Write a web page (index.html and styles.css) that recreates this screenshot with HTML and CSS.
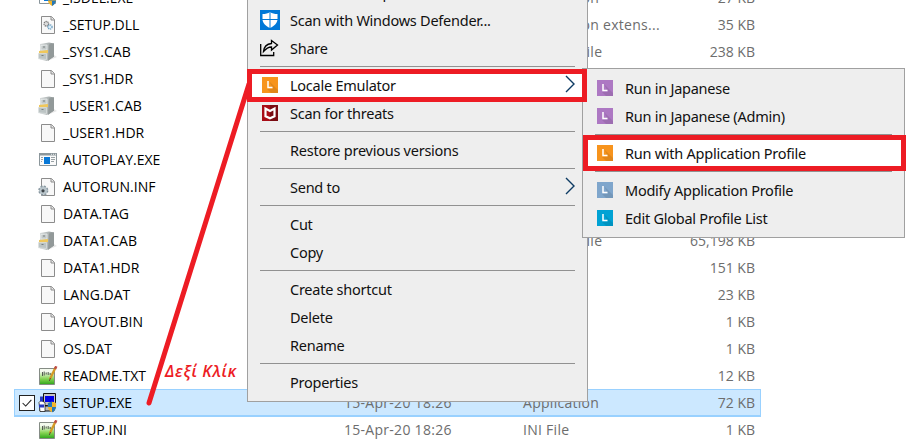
FILE: index.html
```
<!DOCTYPE html>
<html lang="en">
<head>
<meta charset="utf-8">
<title>Files</title>
<link rel="stylesheet" href="styles.css">
</head>
<body>
<svg class="defs" aria-hidden="true">
  <defs>
    <linearGradient id="steel" x1="0" x2="1"><stop offset="0" stop-color="#d7dbdb"/><stop offset=".6" stop-color="#aeb4b4"/><stop offset="1" stop-color="#858d8d"/></linearGradient>
    <linearGradient id="grass" x1="0" y1="0" x2="0" y2="1"><stop offset=".2" stop-color="#f4faee"/><stop offset=".65" stop-color="#84d352"/><stop offset="1" stop-color="#2da51b"/></linearGradient>
    <symbol id="doc" viewBox="0 0 20 20"><path d="M3.5 1.5h10l3 3v14h-13z" fill="#f8f8f8" stroke="#8c8c8c"/><path d="M13 1.5v3.5h3.5" fill="#e5e5e5" stroke="#8c8c8c"/></symbol>
    <symbol id="dll" viewBox="0 0 20 20"><use href="#doc"/><circle cx="8.3" cy="8.8" r="2.3" fill="#ddd" stroke="#777" stroke-width="1.3" stroke-dasharray="1.2 .6"/><circle cx="12" cy="12" r="2.1" fill="#d9edfa" stroke="#6c9dbd" stroke-width="1.3" stroke-dasharray="1.2 .6"/></symbol>
    <symbol id="cab" viewBox="0 0 20 20"><path d="M12 18l7-3-3-2z" fill="#e7e7e7"/><path d="M2 2l9-1.5 5 1v13L9 19l-7-1.500z" fill="url(#steel)"/><path d="M11 2.500l5-1v13L10 19z" fill="#929999"/><path d="M3 3.500l6-.5v5H3z" fill="#c2c8c8" stroke="#edf0f0" stroke-width=".7"/><path d="M1 9l9-1v3l-9 1z" fill="#efc75c"/><path d="M.5 11.500h8v6l-8-.7z" fill="#bcc4c4" stroke="#dce1e1" stroke-width=".7"/><path d="M5 5h2M3.500 13.500h2" stroke="#777f7f"/></symbol>
    <symbol id="auto" viewBox="0 0 20 20"><path d="M1.500 3.500h17v12h-17z" fill="#fafafa" stroke="#8b969b"/><path d="M1 3h18v2.500H1z" fill="#8b969b"/><path d="M13 4.300h1m1 0h1m1 0h1" stroke="#fff" stroke-width=".8"/><path d="M6 7h6v7H6z" fill="#0878d7"/><path d="M3 7.500h2M3 9.500h2M3 11.500h1M13 7.500h4M13 9.500h4M13 11.500h3" stroke="#9aa2a5"/></symbol>
    <symbol id="inf" viewBox="0 0 20 20"><use href="#doc"/><circle cx="5.300" cy="13.500" r="4.200" fill="#b8c4ca" stroke="#8998a1" stroke-width="1.700" stroke-dasharray="2 1.300"/><circle cx="5.300" cy="13.500" r="3.600" fill="#b8c4ca"/><circle cx="5" cy="13.800" r="1.600" fill="#3c4348"/></symbol>
    <symbol id="note" viewBox="0 0 20 20"><path d="M1.500 2.500h15v16h-15z" fill="url(#grass)" stroke="#858c85"/><path d="M4.500 6v4m1.700-4.500v4m2-3v2m2-2.500v3m2-2v2" stroke="#454b45" stroke-width=".9"/><path d="M17.500 1.500L12 13" stroke="#d49a24" stroke-width="2.300"/><path d="M18.300.300L17 3" stroke="#bd4e47" stroke-width="2.500"/><path d="M12.400 12l-1 3" stroke="#594b37"/></symbol>
    <symbol id="shield" viewBox="0 0 10 12"><path d="M5 0l4.500 1.500v4C9.500 8.500 7.500 10.500 5 12 2.500 10.500.5 8.500.5 5.500v-4z" fill="#f2b52c"/><path d="M5 0v6H.5V1.500zM5 6h4.500C9 9 7.500 10.500 5 12z" fill="#2678b9"/></symbol>
    <symbol id="setup" viewBox="0 0 20 20"><path d="M5.500.5h12v12h-12z" fill="#c5c5c5" stroke="#111"/><path d="M7 3h9v6H7z" fill="#0000e8"/><path d="M2 13h14v5H2z" fill="#bbb" stroke="#111"/><path d="M1 9.500l2-2 4 2v9H2z" fill="#fff" stroke="#111" stroke-width=".7"/><path d="M1 11.500h5v3H1zM2 3.500h3v5H2z" fill="#2638bf"/><use href="#shield" x="9" y="8.500" width="10" height="11"/></symbol>
    <symbol id="isdel" viewBox="0 0 20 20"><path d="M1.500 3.500h16v12h-16z" fill="#fff" stroke="#89959b"/><path d="M6 6h9v7H6z" fill="#0878d7"/><use href="#shield" x="9" y="7" width="10" height="11"/></symbol>
    <symbol id="L" viewBox="0 0 16 16"><path d="M0 0h16v16H0z" fill="currentColor"/><path d="M7 4l9 9v3H9l-4-4h6z" fill="#000" opacity=".09"/><path d="M6 4v6.500h4.500" fill="none" stroke="#fff" stroke-width="1.500"/></symbol>
    <symbol id="arrow" viewBox="0 0 10 18"><path d="M1 1l8 8-8 8" fill="none" stroke="#0d3b63" stroke-width="1.400"/></symbol>
  </defs>
</svg>
<main class="stage">
  <div class="files">
    <div class="row"><svg><use href="#isdel"/></svg><span class="name">_ISDEL.EXE</span><span class="date"></span><span class="type">Application</span><span class="size">27 KB</span></div>
    <div class="row"><svg><use href="#dll"/></svg><span class="name">_SETUP.DLL</span><span class="date"></span><span class="type">Application extens...</span><span class="size">35 KB</span></div>
    <div class="row"><svg><use href="#cab"/></svg><span class="name">_SYS1.CAB</span><span class="date"></span><span class="type">Cabinet File</span><span class="size">238 KB</span></div>
    <div class="row"><svg><use href="#doc"/></svg><span class="name">_SYS1.HDR</span></div>
    <div class="row"><svg><use href="#cab"/></svg><span class="name">_USER1.CAB</span></div>
    <div class="row"><svg><use href="#doc"/></svg><span class="name">_USER1.HDR</span></div>
    <div class="row"><svg><use href="#auto"/></svg><span class="name">AUTOPLAY.EXE</span></div>
    <div class="row"><svg><use href="#inf"/></svg><span class="name">AUTORUN.INF</span></div>
    <div class="row"><svg><use href="#doc"/></svg><span class="name">DATA.TAG</span></div>
    <div class="row"><svg><use href="#cab"/></svg><span class="name">DATA1.CAB</span><span class="date"></span><span class="type">Cabinet File</span><span class="size">65,198 KB</span></div>
    <div class="row"><svg><use href="#doc"/></svg><span class="name">DATA1.HDR</span><span class="date"></span><span class="type"></span><span class="size">151 KB</span></div>
    <div class="row"><svg><use href="#doc"/></svg><span class="name">LANG.DAT</span><span class="date"></span><span class="type"></span><span class="size">23 KB</span></div>
    <div class="row"><svg><use href="#doc"/></svg><span class="name">LAYOUT.BIN</span><span class="date"></span><span class="type"></span><span class="size">1 KB</span></div>
    <div class="row"><svg><use href="#doc"/></svg><span class="name">OS.DAT</span><span class="date"></span><span class="type"></span><span class="size">1 KB</span></div>
    <div class="row"><svg><use href="#note"/></svg><span class="name">README.TXT</span><span class="date"></span><span class="type"></span><span class="size">12 KB</span></div>
    <div class="row selected"><span class="check"><svg viewBox="0 0 16 16"><path d="M3 8l3.500 3.500L13 4.500" fill="none" stroke="#222" stroke-width="1.200"/></svg></span><svg><use href="#setup"/></svg><span class="name">SETUP.EXE</span><span class="date">15-Apr-20 18:26</span><span class="type">Application</span><span class="size">72 KB</span></div>
    <div class="row"><svg><use href="#note"/></svg><span class="name">SETUP.INI</span><span class="date">15-Apr-20 18:26</span><span class="type">INI File</span><span class="size">1 KB</span></div>
  </div>

  <nav class="menu context">
    <div class="item"><span class="icon"><svg width="16" height="16" viewBox="0 0 16 16"><path d="M0 0h16v16H0z" fill="#5b5b60"/></svg></span>Edit with Notepad++</div>
    <div class="item"><span class="icon"><svg width="20" height="20" viewBox="0 0 20 20"><path d="M0 0h20v20H0z" fill="#0078d7"/><path d="M10 2c2 1.500 4.500 2 7.500 2v5c0 4-3 7-7.500 9-4.500-2-7.500-5-7.500-9V4C5.500 4 8 3.500 10 2z" fill="#fff"/><path d="M10 2v16M2 9.500h16" stroke="#0078d7"/></svg></span>Scan with Windows Defender...</div>
    <div class="item"><span class="icon"><svg width="20" height="18" viewBox="0 0 20 18"><path d="M.7 5v11.500h13V13M3.500 12.500c.5-5 3.500-7.500 8-8V1.500L17.500 6l-6 5V8c-3.500 0-5.500 1.500-8 4.500z" fill="none" stroke="#000" stroke-width="1.300"/></svg></span>Share</div>
    <hr>
    <div class="item active"><span class="icon orange"><svg width="16" height="16"><use href="#L"/></svg></span>Locale Emulator<svg class="arrow"><use href="#arrow"/></svg></div>
    <div class="item"><span class="icon"><svg width="16" height="16" viewBox="0 0 16 16"><path d="M0 0h16v16H0z" fill="#a80d17"/><path d="M8 0h8v16H8z" fill="#790b12"/><path d="M3.500 3.500v7.700L8 13.300l4.500-2.100V3.500L8 6z" fill="none" stroke="#fff" stroke-width="2.200"/></svg></span>Scan for threats</div>
    <hr>
    <div class="item">Restore previous versions</div>
    <hr>
    <div class="item">Send to<svg class="arrow"><use href="#arrow"/></svg></div>
    <hr>
    <div class="item">Cut</div>
    <div class="item">Copy</div>
    <hr>
    <div class="item">Create shortcut</div>
    <div class="item">Delete</div>
    <div class="item">Rename</div>
    <hr>
    <div class="item">Properties</div>
  </nav>

  <nav class="menu submenu">
    <div class="item"><span class="icon purple"><svg width="16" height="16"><use href="#L"/></svg></span>Run in Japanese</div>
    <div class="item"><span class="icon purple"><svg width="16" height="16"><use href="#L"/></svg></span>Run in Japanese (Admin)</div>
    <hr>
    <div class="item active"><span class="icon orange"><svg width="16" height="16"><use href="#L"/></svg></span>Run with Application Profile</div>
    <hr>
    <div class="item"><span class="icon slate"><svg width="16" height="16"><use href="#L"/></svg></span>Modify Application Profile</div>
    <div class="item"><span class="icon cyan"><svg width="16" height="16"><use href="#L"/></svg></span>Edit Global Profile List</div>
  </nav>

  <svg class="marks" viewBox="0 0 912 445"><path d="M149 403L249 84" stroke-linecap="round"/><path d="M249.500 71.500h335v28h-335zM585.500 137.500h318v31h-318z"/></svg>
  <div class="note">Δεξί Κλίκ</div>
</main>
</body>
</html>
```

FILE: styles.css
```
body { margin: 0; background: #fff; }
.defs { position: absolute; width: 0; height: 0; }
.stage {
  position: relative; width: 912px; height: 445px; overflow: hidden;
  font: 15px/27px "Noto Sans", "Open Sans", sans-serif; color: #111;
}
.files { width: 747px; margin: -16px 0 0 14px; font-family: "Open Sans", "Noto Sans", sans-serif; font-size: 14px; }
.row {
  position: relative; display: grid; grid-template-columns: 20px 286px 179px 132px 100px;
  align-items: center; height: 27px; padding-left: 24px; box-sizing: border-box;
}
.row > svg { width: 20px; height: 20px; }
.name { padding-left: 5px; color: #000; }
.date, .type, .size { color: #6d6d6d; white-space: nowrap; }
.date, .type { letter-spacing: .28px; }
.size { text-align: right; }
.selected { background: #cce8ff; box-shadow: inset 0 0 0 1px #99d1ff, 0 1px #99d1ff; }
.check {
  position: absolute; left: 5px; top: 6px; width: 14px; height: 14px;
  border: 1px solid #222; background: #fff; line-height: 0;
}
.check svg { width: 14px; height: 14px; }
.menu { position: absolute; box-sizing: border-box; background: #eee; border: 1px solid #a0a0a0; }
.context { left: 247px; top: -28px; width: 341px; height: 430px; padding-top: 5px; }
.submenu { left: 582px; top: 68px; width: 323px; height: 170px; padding-top: 5px; }
.item {
  position: relative; display: flex; align-items: center; height: 28px;
  padding-left: 42px; font-size: 14.5px; letter-spacing: -.25px; white-space: nowrap;
}
.active { background: #fff; }
.icon { position: absolute; left: 12px; width: 20px; height: 28px; display: flex; align-items: center; justify-content: center; }
.orange { color: #f7941d; }
.purple { color: #ad78c3; }
.slate { color: #7fa6cc; }
.cyan { color: #00a2d4; }
.menu hr { height: 1px; margin: 4px 12px; border: 0; background: #919191; }
.arrow { width: 10px; height: 18px; margin: 0 12px 2px auto; }
.marks { position: absolute; inset: 0; width: 912px; height: 445px; fill: none; stroke: #ed1c24; stroke-width: 5; }
.note {
  position: absolute; left: 165px; top: 358px; color: #ed1c24;
  font: italic 600 16px/27px "Open Sans", sans-serif; letter-spacing: .7px; white-space: nowrap;
}
```
